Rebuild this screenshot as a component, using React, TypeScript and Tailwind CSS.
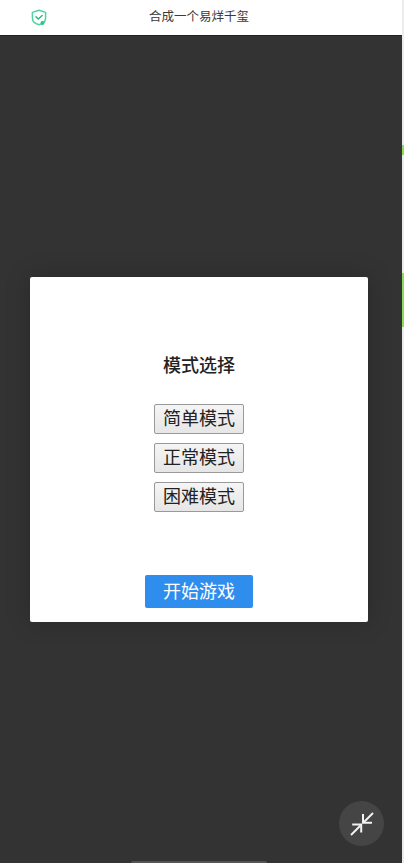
const cjk = "font-['Liberation_Sans','Noto_Sans_CJK_SC',sans-serif]";

const modes = ["简单模式", "正常模式", "困难模式"];

function ShieldIcon() {
  return (
    <svg width="16" height="17" viewBox="0 0 16 17" fill="none">
      <path
        d="M8 1.2 14.6 3.4V9C14.6 12.4 11.8 14.8 8 15.8 4.2 14.8 1.4 12.4 1.4 9V3.4Z"
        stroke="#4fd3a3"
        strokeWidth="1.5"
        strokeLinejoin="round"
      />
      <path d="M5 7.8 7.3 10 11.2 6.4" stroke="#27b583" strokeWidth="1.4" strokeLinecap="round" strokeLinejoin="round" />
      <circle cx="11.5" cy="14" r="2" fill="#2fc48d" />
    </svg>
  );
}

function CollapseIcon() {
  return (
    <svg width="24" height="24" viewBox="0 0 24 24" fill="none" stroke="#f2f2f2" strokeWidth="2">
      <path d="M1 23 10.5 13.5" />
      <path d="M2.2 12.5H11.2V20.5" />
      <path d="M23 1 13.5 10.5" />
      <path d="M13 2V10.8H22" />
    </svg>
  );
}

export default function App() {
  return (
    <div className={`relative flex h-[863px] w-[404px] overflow-hidden bg-[#ececec] ${cjk}`}>
      <div className="flex w-[402px] shrink-0 flex-col">
        <header className="flex h-[36px] shrink-0 items-center border-b border-[#222] bg-white pl-[31px]">
          <ShieldIcon />
          <h1 className="ml-[102px] text-[12.5px] leading-[35px] text-[#3a3a3a]">合成一个易烊千玺</h1>
        </header>

        <main className="flex flex-1 flex-col items-start bg-[#333333] pt-[241px] pl-[30px]">
          <section className="flex h-[345px] w-[338px] flex-col items-center rounded-[2px] bg-white pt-[78px] shadow-[0_0_24px_rgba(0,0,0,0.22)]">
            <h2 className="text-[18px] leading-[22px] font-medium text-[#222]">模式选择</h2>
            <div className="mt-[27px] flex flex-col gap-[9px]">
              {modes.map((mode) => (
                <button
                  key={mode}
                  type="button"
                  className="h-[30px] w-[90px] rounded-[2px] border border-[#999] bg-gradient-to-b from-[#f5f5f5] to-[#e6e6e6] text-[18px] leading-none text-[#222]"
                >
                  {mode}
                </button>
              ))}
            </div>
            <button
              type="button"
              className="mt-[63px] h-[33px] w-[108px] rounded-[2px] bg-[#2f8ded] text-[18px] leading-none text-white"
            >
              开始游戏
            </button>
          </section>
        </main>
      </div>

      {/* sliver of the page behind, on the right edge */}
      <div className="flex w-[2px] flex-col pt-[145px]">
        <div className="h-[10px] bg-[#8fdc5c]" />
        <div className="mt-[118px] h-[54px] bg-[#8fdc5c]" />
      </div>

      <button
        type="button"
        className="absolute top-[801px] left-[339px] flex size-[45px] items-center justify-center rounded-full bg-[#454545]"
      >
        <CollapseIcon />
      </button>
      <div className="absolute bottom-0 left-[131px] h-[2px] w-[136px] rounded-t-sm bg-[#555]" />
    </div>
  );
}
